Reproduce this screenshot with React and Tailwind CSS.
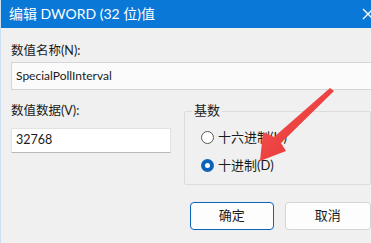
import React from 'react'

const ui = { fontFamily: 'Lato, "Noto Sans CJK SC", sans-serif' }

function Radio({ checked, label }) {
  return (
    <div className="flex items-center h-[18px]">
      {checked ? (
        <span className="w-[13px] h-[13px] rounded-full bg-[#0a64b8] flex items-center justify-center">
          <span className="w-[5px] h-[5px] rounded-full bg-white" />
        </span>
      ) : (
        <span className="w-[13px] h-[13px] rounded-full border border-[#5a5a5a] bg-white" />
      )}
      <span className="ml-[4px] text-[13px] text-[#1a1a1a] leading-none">{label}</span>
    </div>
  )
}

export default function App() {
  return (
    <div className="relative w-[371px] h-[243px] overflow-hidden bg-[#f0f0f0] border-l border-[#cde0f2]" style={ui}>
      {/* 标题栏 */}
      <div className="h-[28px] bg-[#0a78d6] flex items-center pl-[8px] text-white">
        <span className="text-[14px] leading-none">编辑 DWORD (32 位)值</span>
        <svg className="ml-auto mr-[-4px] shrink-0" width="14" height="14" viewBox="0 0 14 14">
          <path d="M2 2 L12 12 M12 2 L2 12" stroke="white" strokeWidth="1.3" />
        </svg>
      </div>

      <div className="pl-[10px]">
        <div className="mt-[14px] text-[12.5px] leading-[18px] text-[#1a1a1a]">数值名称(N):</div>
        <div className="mt-[2px] w-[380px] h-[28px] border border-[#d6d6d6] bg-[#fbfbfb] flex items-center pl-[4px] text-[12px] text-[#1a1a1a]">
          SpecialPollInterval
        </div>

        <div className="flex mt-[12px]">
          <div className="w-[160px]">
            <div className="text-[12.5px] leading-[18px] text-[#1a1a1a]">数值数据(V):</div>
            <div className="mt-[8px] w-[160px] h-[25px] bg-white border border-[#e2e2e2] border-b-[#b8b8b8] flex items-center pl-[4px] text-[12.5px] text-[#1a1a1a]">
              32768
            </div>
          </div>

          <div className="ml-[13px] relative mt-[9px] w-[200px] h-[74px] border border-[#dcdcdc] rounded-[2px]">
            <span className="absolute left-[7px] top-[-11px] px-[2px] bg-[#f0f0f0] text-[13px] leading-[18px] text-[#1a1a1a]">基数</span>
            <div className="pl-[16px] pt-[16px] flex flex-col gap-[10px]">
              <Radio label="十六进制(H)" />
              <Radio checked label="十进制(D)" />
            </div>
          </div>
        </div>

        <div className="flex mt-[17px] ml-[179px] gap-[11px]">
          <div className="w-[87px] h-[28px] rounded-[4px] border border-[#0a64b8] bg-[#fdfdfd] flex items-center justify-center text-[13px] text-[#1a1a1a]">确定</div>
          <div className="w-[90px] h-[28px] rounded-[4px] border border-[#d4d4d4] bg-[#fdfdfd] flex items-center justify-center text-[13px] text-[#1a1a1a]">取消</div>
        </div>
      </div>

      {/* 红色箭头 */}
      <svg className="absolute left-0 top-0 pointer-events-none" width="371" height="243" viewBox="0 0 371 243">
        <defs>
          <linearGradient id="ar" x1="0" y1="0" x2="1" y2="1">
            <stop offset="0" stopColor="#f25a5a" />
            <stop offset="1" stopColor="#e82b2b" />
          </linearGradient>
        </defs>
        <polygon points="329,88 333,91 280,143 285,151 259,161 262,132 273,137" fill="url(#ar)" />
      </svg>
    </div>
  )
}
